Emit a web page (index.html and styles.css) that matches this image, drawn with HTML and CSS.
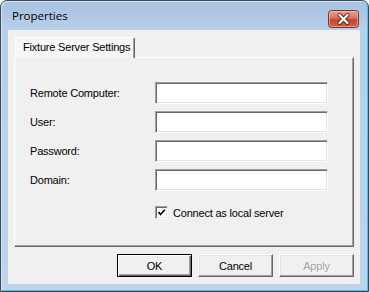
FILE: index.html
```html
<!DOCTYPE html>
<html lang="en">
<head>
    <meta charset="UTF-8">
    <title>Properties</title>
    <link rel="stylesheet" href="styles.css">
</head>
<body>
    <div class="window">
        <div class="titlebar">
            <span class="title">Properties</span>
            <span class="close">
                <svg width="31" height="18" viewBox="0 0 31 18">
                    <defs>
                        <linearGradient id="red" x1="0" y1="0" x2="0" y2="1">
                            <stop offset="0" stop-color="#e9a89a"/>
                            <stop offset="0.45" stop-color="#d5735f"/>
                            <stop offset="0.55" stop-color="#c2432b"/>
                            <stop offset="1" stop-color="#d8644a"/>
                        </linearGradient>
                    </defs>
                    <rect x="0.5" y="0.5" width="30" height="17" rx="3" fill="url(#red)" stroke="#7e3326"/>
                    <rect x="1.5" y="1.5" width="28" height="15" rx="2" fill="none" stroke="#f0c2b6" stroke-opacity="0.6"/>
                    <path d="M11.5 5 L19.5 13 M19.5 5 L11.5 13" stroke="#5b2218" stroke-width="4" stroke-linecap="round"/>
                    <path d="M11.5 5 L19.5 13 M19.5 5 L11.5 13" stroke="#fff" stroke-width="2.2" stroke-linecap="round"/>
                </svg>
            </span>
        </div>
        <div class="client">
            <div class="tabs">
                <div class="tab">Fixture Server Settings</div>
            </div>
            <div class="panel">
                <div class="form">
                    <label>Remote Computer:</label>
                    <input type="text" class="field">
                    <label>User:</label>
                    <input type="text" class="field">
                    <label>Password:</label>
                    <input type="text" class="field">
                    <label>Domain:</label>
                    <input type="text" class="field">
                    <div class="check-row">
                        <span class="check">
                            <svg width="9" height="9" viewBox="0 0 9 9">
                                <path d="M1.5 4 L3.5 6.5 L7.8 1.8" fill="none" stroke="#000" stroke-width="1.7"/>
                            </svg>
                        </span>
                        <span>Connect as local server</span>
                    </div>
                </div>
            </div>
            <div class="buttons">
                <button class="btn default">OK</button>
                <button class="btn">Cancel</button>
                <button class="btn disabled">Apply</button>
            </div>
        </div>
    </div>
</body>
</html>
```

FILE: styles.css
```css
body {
    margin: 0;
    font-family: "Liberation Sans", Arial, sans-serif;
    background: #fff;
}
.window {
    width: 369px;
    height: 292px;
    box-sizing: border-box;
    border: 1px solid #3b4756;
    border-radius: 7px 7px 0 0;
    background: linear-gradient(#a6c1e0, #b8cfe9 28px, #bdd4ec);
    box-shadow: inset 1px 1px 0 #d9e6f4, inset -1px -1px 0 #48c4e6;
    padding: 0 8px 7px 7px;
    display: flex;
    flex-direction: column;
}
.titlebar {
    height: 29px;
    display: flex;
    justify-content: space-between;
    align-items: flex-start;
}
.title {
    font-family: "Open Sans", "Liberation Sans", sans-serif;
    font-size: 11.5px;
    color: #000;
    padding: 7px 0 0 4px;
}
.close {
    margin: 9px 1px 0 0;
    height: 18px;
}
.close svg {
    display: block;
}
.client {
    flex: 1;
    background: #f0f0f0;
    padding: 7px 6px 0 6px;
    font-size: 11px;
    letter-spacing: -0.2px;
}
.tabs {
    display: flex;
    height: 20px;
}
.tab {
    margin-left: 1px;
    width: 120px;
    box-sizing: border-box;
    height: 21px;
    padding: 3px 0 0 7px;
    background: #f6f6f6;
    border: 1px solid #fff;
    border-right-color: #696969;
    border-bottom: none;
    box-shadow: inset -1px 0 0 #a0a0a0;
    border-radius: 2px 2px 0 0;
    position: relative;
    z-index: 1;
}
.panel {
    width: 340px;
    height: 190px;
    box-sizing: border-box;
    border: 1px solid;
    border-color: #fff #696969 #696969 #fff;
    box-shadow: inset -1px -1px 0 #a0a0a0;
}
.form {
    display: grid;
    grid-template-columns: 125px 173px;
    grid-auto-rows: 22px;
    row-gap: 7px;
    padding: 24px 0 0 15px;
}
.form label {
    display: flex;
    align-items: center;
}
.field {
    margin: 0;
    padding: 0;
    width: 173px;
    height: 22px;
    box-sizing: border-box;
    background: #fff;
    border: 1px solid;
    border-color: #a0a0a0 #fff #fff #a0a0a0;
    box-shadow: inset 1px 1px 0 #696969, inset -1px -1px 0 #e3e3e3;
    outline: none;
}
.check-row {
    grid-column: 2;
    display: flex;
    align-items: center;
    gap: 5px;
    margin-top: 7px;
}
.check {
    width: 13px;
    height: 13px;
    box-sizing: border-box;
    background: #fff;
    border: 1px solid;
    border-color: #a0a0a0 #fff #fff #a0a0a0;
    box-shadow: inset 1px 1px 0 #696969, inset -1px -1px 0 #e3e3e3;
    display: flex;
    align-items: center;
    justify-content: center;
}
.check svg {
    display: block;
}
.buttons {
    display: flex;
    justify-content: flex-end;
    gap: 6px;
    width: 340px;
    margin-top: 7px;
}
.btn {
    width: 75px;
    height: 23px;
    margin: 0;
    padding: 0;
    font-family: "Liberation Sans", Arial, sans-serif;
    font-size: 11px;
    letter-spacing: -0.2px;
    color: #000;
    background: #f0f0f0;
    border: 1px solid;
    border-color: #fff #696969 #696969 #fff;
    box-shadow: inset -1px -1px 0 #a0a0a0, inset 1px 1px 0 #e3e3e3;
}
.btn.default {
    border-color: #000;
    box-shadow: inset 1px 1px 0 #fff, inset -1px -1px 0 #696969, inset -2px -2px 0 #a0a0a0;
}
.btn.disabled {
    color: #a0a0a0;
    text-shadow: 1px 1px 0 #fff;
}
```
